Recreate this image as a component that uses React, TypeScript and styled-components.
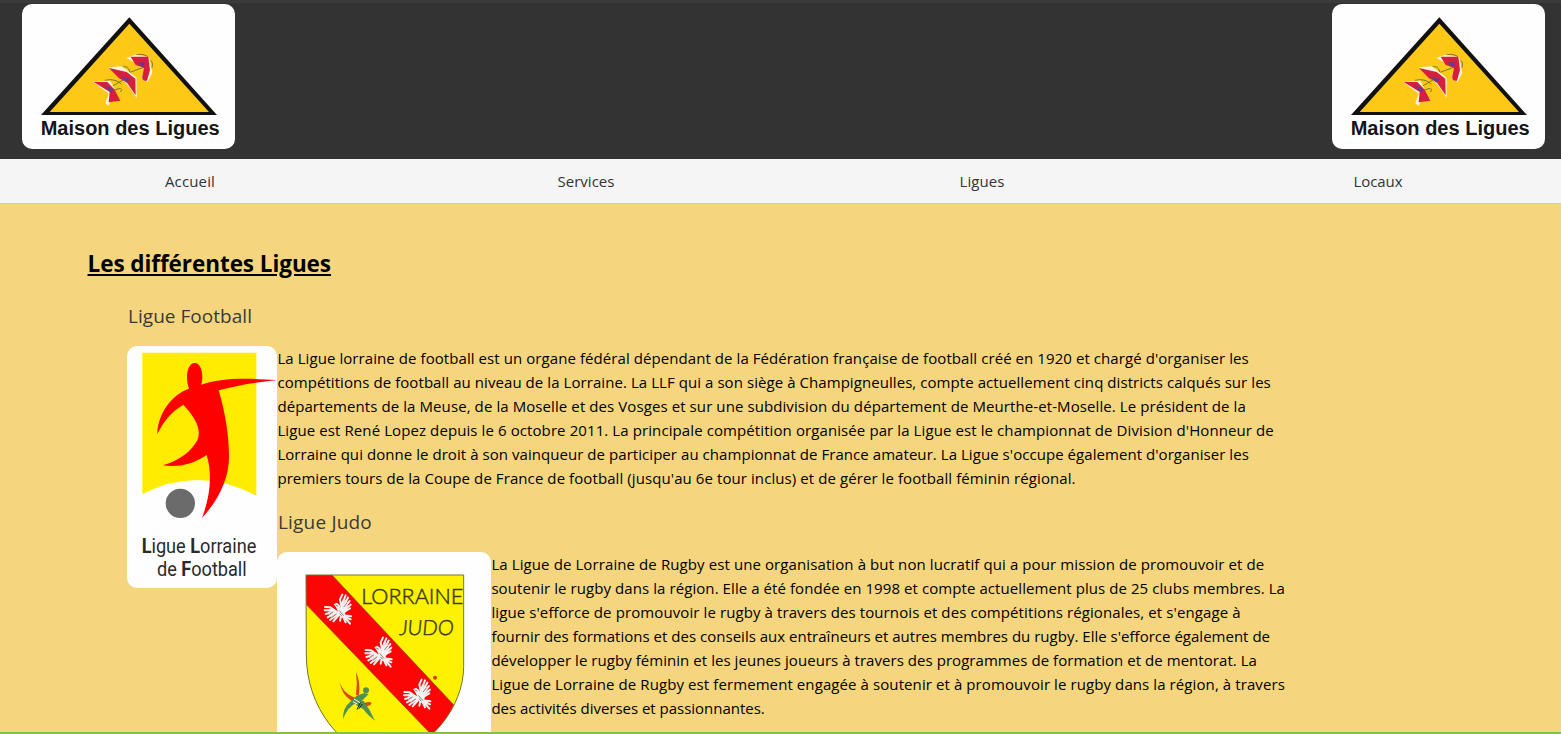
import React from "react";
import styled, { createGlobalStyle } from "styled-components";

const GlobalStyle = createGlobalStyle`
  * { box-sizing: border-box; }
  html, body { margin: 0; padding: 0; }
  body {
    background: #f5d67e;
    font-family: "Open Sans", "Noto Sans", sans-serif;
    font-size: 15px;
    color: #000;
    overflow: hidden;
  }
`;

const Page = styled.div`
  display: flex;
  flex-direction: column;
  height: 734px;
  overflow: hidden;
  background: #f5d67e;
  border-bottom: 2px solid #85bf45;
`;

const Header = styled.header`
  flex: none;
  display: flex;
  justify-content: space-between;
  height: 159px;
  padding: 1px 16px 0 22px;
  background: #333;
  border-top: 3px solid #3b3b3b;
`;

const Nav = styled.nav`
  flex: none;
  display: flex;
  justify-content: space-between;
  align-items: center;
  height: 45px;
  padding: 0 153px 0 160px;
  background: #f5f5f5;
  border-bottom: 1px solid #ccc;
`;

const NavLink = styled.a<{ $tracking: number }>`
  width: 60px;
  text-align: center;
  white-space: nowrap;
  color: #333;
  line-height: 24px;
  letter-spacing: ${(p) => p.$tracking}px;
`;

const Main = styled.main`
  flex: 1;
  min-height: 0;
  overflow: hidden;
  padding: 44px 0 0 87.5px;
`;

const PageTitle = styled.h1`
  margin: 0 0 21px;
  font-size: 22.5px;
  font-weight: 700;
  line-height: 32px;
  letter-spacing: -0.06px;
  text-decoration: underline;
  text-decoration-thickness: 2px;
  text-underline-offset: 2px;
`;

const League = styled.section<{ $indent?: number; $top?: number }>`
  padding-left: ${(p) => p.$indent ?? 0}px;
  padding-top: ${(p) => p.$top ?? 0}px;
`;

const LeagueTitle = styled.h2<{ $tracking: number }>`
  margin: 0 0 15px;
  padding-left: 1px;
  font-size: 19px;
  font-weight: 400;
  line-height: 30px;
  color: #3b3935;
  letter-spacing: ${(p) => p.$tracking}px;
`;

const LeagueRow = styled.div`
  display: flex;
  align-items: flex-start;
`;

const Card = styled.svg<{ $w: number; $h: number }>`
  flex: none;
  display: block;
  width: ${(p) => p.$w}px;
  height: ${(p) => p.$h}px;
  border-radius: 10px;
  background: #fefefe;
`;

const LeagueBody = styled.div`
  flex: none;
`;

const Paragraph = styled.p`
  margin: 0;
  padding-left: 0.4px;
`;

const Line = styled.span<{ $tracking: number }>`
  display: block;
  white-space: nowrap;
  line-height: 24px;
  letter-spacing: ${(p) => p.$tracking}px;
`;

type TextLine = [string, number];

const navItems: TextLine[] = [
  ["Accueil", 0.134],
  ["Services", 0.021],
  ["Ligues", 0.078],
  ["Locaux", -0.073],
];

const football: TextLine[] = [
  ["La Ligue lorraine de football est un organe fédéral dépendant de la Fédération française de football créé en 1920 et chargé d'organiser les", 0.075],
  ["compétitions de football au niveau de la Lorraine. La LLF qui a son siège à Champigneulles, compte actuellement cinq districts calqués sur les", 0.066],
  ["départements de la Meuse, de la Moselle et des Vosges et sur une subdivision du département de Meurthe-et-Moselle. Le président de la", 0.09],
  ["Ligue est René Lopez depuis le 6 octobre 2011. La principale compétition organisée par la Ligue est le championnat de Division d'Honneur de", 0.097],
  ["Lorraine qui donne le droit à son vainqueur de participer au championnat de France amateur. La Ligue s'occupe également d'organiser les", 0.055],
  ["premiers tours de la Coupe de France de football (jusqu'au 6e tour inclus) et de gérer le football féminin régional.", 0.085],
];

const judo: TextLine[] = [
  ["La Ligue de Lorraine de Rugby est une organisation à but non lucratif qui a pour mission de promouvoir et de", 0.1],
  ["soutenir le rugby dans la région. Elle a été fondée en 1998 et compte actuellement plus de 25 clubs membres. La", 0.076],
  ["ligue s'efforce de promouvoir le rugby à travers des tournois et des compétitions régionales, et s'engage à", 0.1],
  ["fournir des formations et des conseils aux entraîneurs et autres membres du rugby. Elle s'efforce également de", 0.015],
  ["développer le rugby féminin et les jeunes joueurs à travers des programmes de formation et de mentorat. La", 0.05],
  ["Ligue de Lorraine de Rugby est fermement engagée à soutenir et à promouvoir le rugby dans la région, à travers", 0.092],
  ["des activités diverses et passionnantes.", -0.02],
];

function Text({ lines }: { lines: TextLine[] }) {
  return (
    <Paragraph>
      {lines.map(([text, tracking]) => (
        <Line key={text} $tracking={tracking}>{text}</Line>
      ))}
    </Paragraph>
  );
}

function MaisonLogo() {
  return (
    <Card $w={213} $h={145} viewBox="66 12 639 435">
      <path d="M388 52 L651 345 H123Z" fill="#111" />
      <path d="M388 71 L627 336 H149Z" fill="#fdc816" />
      <g fill="none" stroke="#7c7a1c" strokeWidth="3">
        <path d="M314 241 Q345 234 364 252 M362 202 Q386 194 389 216 M340 272 Q373 257 362 276 M382 220 L430 202 M335 260 L372 238" />
        <path d="M398 171 Q421 155 444 170 M452 181 Q461 189 455 205" />
      </g>
      <path d="M277 244 L331 242 L343 266 L326 318 L316 309 L326 281Z" fill="#fff4dc" />
      <path d="M325 202 L366 199 L410 233 L410 294 L390 264 L373 244Z" fill="#fff4dc" />
      <path d="M379 174 L405 164 L448 171 L457 218 L443 246 L425 236 L432 203Z" fill="#fff4dc" />
      <path d="M280 245 L322 246 L344 269 L361 302 L326 307 L329 276Z" fill="#d71f3c" />
      <path d="M327 204 L380 216 L406 236 L407 286 L380 247 L357 235Z" fill="#d71f3c" />
      <path d="M392 170 L445 170 L450 210 L441 242 Q424 244 427 229 L432 203 L407 195Z" fill="#d71f3c" />
      <path d="M312 256 L340 266 L335 280Z M363 230 L391 236 L379 248Z M411 189 L434 186 L432 204Z" fill="#6a3a91" />
      <text x="122" y="405" fontFamily="Liberation Sans" fontWeight="700" fontSize="58" fill="#151515" textLength="537" lengthAdjust="spacingAndGlyphs">
        Maison des Ligues
      </text>
    </Card>
  );
}

function FootballLogo() {
  return (
    <Card $w={150} $h={242} viewBox="51 33 450 726">
      <path d="M97 53 H439 V482 Q268 390 97 477Z" fill="#ffec00" />
      <path
        d="M254 84 C270 84 277 106 277 127 C277 138 275 144 274 149 C330 130 400 128 501 136 C430 142 376 153 326 166 C345 230 357 300 357 365 C357 432 325 495 276 549 C300 485 308 420 290 360 C245 390 205 397 158 391 C212 376 245 347 262 316 C276 283 255 246 220 209 C185 230 162 256 142 297 C143 237 184 179 237 161 C233 150 231 138 231 126 C231 103 240 84 254 84Z"
        fill="#fe0000"
      />
      <circle cx="211" cy="505" r="44" fill="#6b6b6b" />
      <g fontFamily="'Liberation Sans Narrow', Roboto, sans-serif" fontSize="60" fill="#2a2a2a">
        <text x="95" y="653" textLength="344" lengthAdjust="spacingAndGlyphs">
          <tspan fontWeight="700">L</tspan>igue <tspan fontWeight="700">L</tspan>orraine
        </text>
        <text x="141" y="724" textLength="269" lengthAdjust="spacingAndGlyphs">
          de <tspan fontWeight="700">F</tspan>ootball
        </text>
      </g>
    </Card>
  );
}

function Eagle({ x, y }: { x: number; y: number }) {
  return (
    <g transform={`translate(${x} ${y})`} strokeLinecap="round" strokeLinejoin="round">
      <path d="M2 14 L-26 -3 L-31 12 L-24 22 L-12 28Z M10 8 L12 -30 L24 -28 L31 -10 L20 14Z" fill="#c9a9a9" />
      <g fill="none" stroke="#f6f2f2" strokeWidth="6">
        <path d="M2 12 L-24 -6 L-40 -7 M-14 2 L-41 3 M-8 6 L-38 14 M-4 8 L-32 24 M0 12 L-25 32 M4 14 L-15 36" />
        <path d="M12 6 L5 -30 L12 -44 M10 -12 L22 -42 M12 -4 L29 -35 M13 0 L34 -25 M15 4 L37 -14 M17 8 L35 -3" />
        <path d="M14 18 L38 21 M16 20 L37 30 M16 20 L35 43 M14 22 L22 39 M8 20 L5 34" />
      </g>
      <path d="M-14 -15 L-5 -20 L4 -13 L9 -2 L19 8 L21 22 L10 25 L0 17 L-2 4 L-8 -8Z" fill="#f6f2f2" />
      <path d="M-8 -13 L-2 -10 M3 4 L15 18 M5 14 L10 20 M-16 8 L-25 13 M17 -8 L25 -18 M-6 14 L-17 23" fill="none" stroke="#5c4348" strokeWidth="2" />
    </g>
  );
}

function JudoLogo() {
  return (
    <Card $w={214} $h={214} viewBox="21 36 642 642">
      <defs>
        <clipPath id="shield">
          <path d="M108 105 H581 V380 C581 500 480 630 345 662 C210 630 109 500 109 345Z" />
        </clipPath>
      </defs>
      <g clipPath="url(#shield)">
        <path d="M100 100 H590 V680 H100Z" fill="#fff200" />
        <path d="M60 60 H140 L186 105 L543 486 L610 556 L520 620 L474 573 L108 193 L60 143Z" fill="#fb0505" stroke="#8a4a10" strokeWidth="2" />
      </g>
      <path d="M108 105 H581 V380 C581 500 480 630 345 662 C210 630 109 500 109 345Z" fill="none" stroke="#77742a" strokeWidth="3" />
      <Eagle x={205} y={208} />
      <Eagle x={327} y={337} />
      <Eagle x={443} y={463} />
      <circle cx="495" cy="413" r="6" fill="#d2420c" />
      <g fill="#d9480f">
        <path d="M209 427 Q220 460 248 470 L276 481 L274 490 L244 482 Q216 466 209 427Z" />
        <path d="M258 396 Q272 425 267 464 L258 466 Q263 430 258 396Z" />
        <path d="M283 489 Q301 482 305 490 Q301 500 286 497Z" />
      </g>
      <g fill="#4f9150">
        <circle cx="288" cy="451" r="9" />
        <path d="M283 459 L296 462 L279 479 L259 489 Q233 500 219 538 Q217 506 240 486 L260 467Z" />
        <path d="M262 480 L281 483 Q301 510 315 542 Q293 526 279 507 L258 495Z" />
      </g>
      <path d="M271 487 L261 509 M277 492 L266 507" stroke="#222" strokeWidth="3" />
      <path d="M252 477 L270 488 M249 485 L262 492" stroke="#fff" strokeWidth="3" />
      <g fontFamily="Lato" fontWeight="300" fill="#3d3a10" stroke="#3d3a10" strokeWidth="1.4">
        <text x="274" y="192" fontSize="63" textLength="306" lengthAdjust="spacingAndGlyphs">LORRAINE</text>
        <text transform="translate(386 285) skewX(-5)" fontSize="63" textLength="164" lengthAdjust="spacingAndGlyphs">JUDO</text>
      </g>
    </Card>
  );
}

export default function App() {
  return (
    <>
      <GlobalStyle />
      <Page>
        <Header>
          <MaisonLogo />
          <MaisonLogo />
        </Header>
        <Nav>
          {navItems.map(([label, tracking]) => (
            <NavLink key={label} $tracking={tracking}>{label}</NavLink>
          ))}
        </Nav>
        <Main>
          <PageTitle>Les différentes Ligues</PageTitle>
          <League $indent={39.5}>
            <LeagueTitle $tracking={0.036}>Ligue Football</LeagueTitle>
            <LeagueRow>
              <FootballLogo />
              <LeagueBody>
                <Text lines={football} />
                <League $top={17}>
                  <LeagueTitle $tracking={0.189}>Ligue Judo</LeagueTitle>
                  <LeagueRow>
                    <JudoLogo />
                    <LeagueBody>
                      <Text lines={judo} />
                    </LeagueBody>
                  </LeagueRow>
                </League>
              </LeagueBody>
            </LeagueRow>
          </League>
        </Main>
      </Page>
    </>
  );
}
